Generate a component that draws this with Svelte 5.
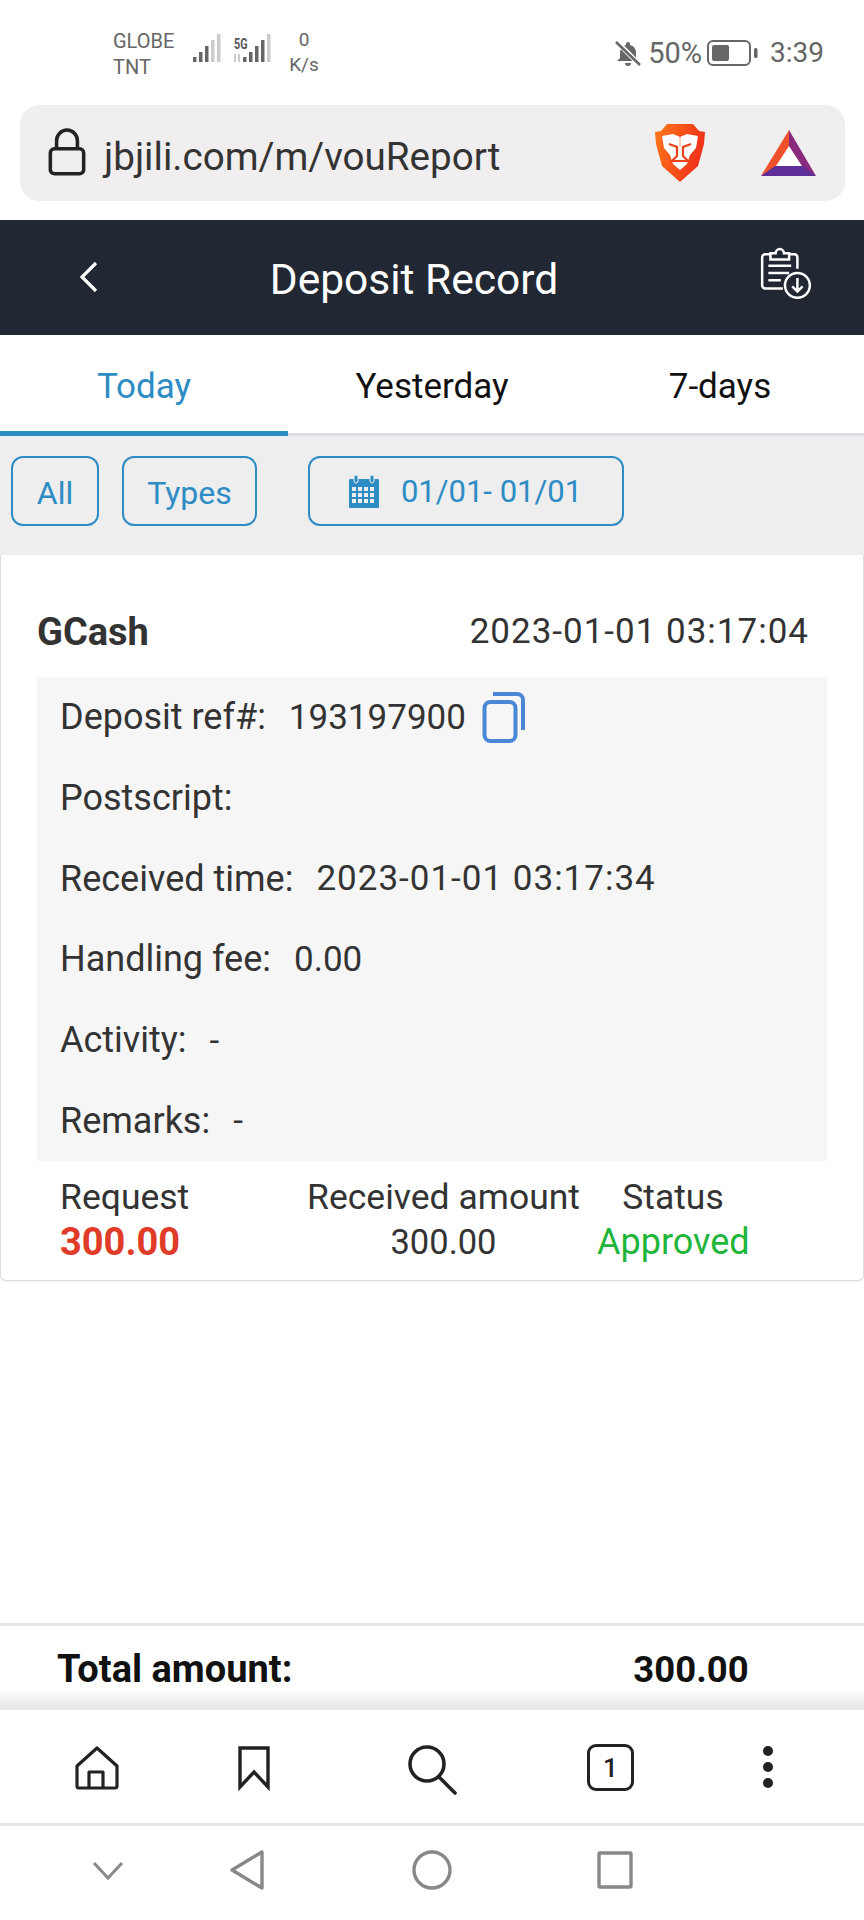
<script>
  const rows = [
    { label: 'Deposit ref#:', value: '193197900', copy: true },
    { label: 'Postscript:', value: '' },
    { label: 'Received time:', value: '2023-01-01 03:17:34', wide: true },
    { label: 'Handling fee:', value: '0.00' },
    { label: 'Activity:', value: '-' },
    { label: 'Remarks:', value: '-' }
  ];
  const tabs = ['Today', 'Yesterday', '7-days'];
</script>

<div class="phone">
  <div class="status">
    <div class="carrier"><span>GLOBE</span><span>TNT</span></div>
    <svg class="signal" width="90" height="36" viewBox="0 0 90 36">
      <g fill="#666">
        <rect x="0" y="27" width="3.5" height="5"/><rect x="6" y="22" width="3.5" height="10"/><rect x="12" y="16" width="3.5" height="16"/>
        <rect x="50" y="27" width="3.5" height="5"/><rect x="56" y="22" width="3.5" height="10"/><rect x="62" y="16" width="3.5" height="16"/><rect x="68" y="10" width="3.5" height="22"/>
      </g>
      <g fill="#ccc">
        <rect x="18" y="10" width="3.5" height="22"/><rect x="24" y="4" width="3.5" height="28"/>
        <rect x="74" y="4" width="3.5" height="28"/>
        <rect x="41" y="24" width="2" height="8"/><rect x="45" y="24" width="2" height="8"/>
      </g>
    </svg>
    <span class="fiveg">5G</span>
    <div class="speed"><span>0</span><span>K/s</span></div>
    <div class="status-right">
      <svg width="28" height="28" viewBox="0 0 28 28">
        <path d="M14 3a2 2 0 0 1 2 2v1c4 1 6 4 6 8v5l3 3H3l3-3v-5c0-4 2-7 6-8V5a2 2 0 0 1 2-2z" fill="#666"/>
        <path d="M11 24h6a3 3 0 0 1-6 0z" fill="#666"/>
        <path d="M3 3l23 23" stroke="#fff" stroke-width="5"/>
        <path d="M2 3l24 23" stroke="#666" stroke-width="2.5"/>
      </svg>
      <span class="pct">50%</span>
      <svg width="52" height="28" viewBox="0 0 52 28">
        <rect x="1" y="2" width="42" height="24" rx="5" fill="none" stroke="#666" stroke-width="2"/>
        <rect x="5" y="6" width="17" height="16" rx="2" fill="#666"/>
        <rect x="47" y="9" width="3.5" height="10" rx="1.5" fill="#666"/>
      </svg>
      <span class="time">3:39</span>
    </div>
  </div>

  <div class="address">
    <svg class="lock" width="40" height="50" viewBox="0 0 38 48">
      <path d="M9 20V12a10 10 0 0 1 20 0v8" fill="none" stroke="#222" stroke-width="3.4"/>
      <rect x="3" y="20" width="32" height="24" rx="4" fill="none" stroke="#222" stroke-width="3.4"/>
    </svg>
    <span class="url">jbjili.com/m/vouReport</span>
    <svg class="brave" width="54" height="62" viewBox="0 0 54 62">
      <defs>
        <linearGradient id="brv" x1="0" y1="0" x2="1" y2="0.3">
          <stop offset="0" stop-color="#ff7a1a"/><stop offset="1" stop-color="#f0301a"/>
        </linearGradient>
      </defs>
      <path d="M14 2h26l6 7 6 1-1 12-6 22-18 16-18-16L3 22 2 10l6-1z" fill="url(#brv)"/>
      <path d="M9 14l11-2 7 3 7-3 11 2-2 12-6 7-3 9-7 6-7-6-3-9-6-7z" fill="#fff"/>
      <path d="M16 22l8 3v9l-5 5h16l-5-5v-9l8-3" fill="none" stroke="#f0401a" stroke-width="2.2"/>
      <path d="M27 15v10" stroke="#fbd0c0" stroke-width="2"/>
    </svg>
    <svg class="bat" width="56" height="50" viewBox="0 0 56 50">
      <polygon points="28,2 28,24 14,40 0,48" fill="#f0512d"/>
      <polygon points="28,2 55,48 42,40 28,24" fill="#8a2a7c"/>
      <polygon points="0,48 14,38 42,38 55,48" fill="#5d2d9a"/>
      <polygon points="28,18 41,38 15,38" fill="#fff"/>
    </svg>
  </div>

  <header class="bar">
    <svg class="back" width="22" height="34" viewBox="0 0 22 34">
      <path d="M18 3L4 17l14 14" fill="none" stroke="#fff" stroke-width="3.2"/>
    </svg>
    <h1>Deposit Record</h1>
    <svg class="report" width="56" height="56" viewBox="0 0 54 54" fill="none" stroke="#fff" stroke-width="2.4">
      <path d="M12 7H7a3 3 0 0 0-3 3v27a3 3 0 0 0 3 3h17"/>
      <path d="M30 7h5a3 3 0 0 1 3 3v11"/>
      <path d="M12 6h5a4 4 0 0 1 8 0h5v6H12z"/>
      <path d="M10 18h22M10 25h20M10 32h12"/>
      <circle cx="38" cy="37" r="12"/>
      <path d="M38 30v13M33 38l5 5 5-5"/>
    </svg>
  </header>

  <nav class="tabs">
    {#each tabs as t, i}
      <div class="tab" class:active={i === 0}>{t}</div>
    {/each}
  </nav>

  <div class="filters">
    <button class="chip all">All</button>
    <button class="chip types">Types</button>
    <button class="chip date">
      <svg width="32" height="36" viewBox="0 0 32 36">
        <path d="M2 6h28a1 1 0 0 1 1 1v27a1 1 0 0 1-1 1H2a1 1 0 0 1-1-1V7a1 1 0 0 1 1-1z" fill="#2d8cc4"/>
        <rect x="6" y="2" width="4" height="8" rx="2" fill="#2d8cc4" stroke="#eee" stroke-width="1"/>
        <rect x="22" y="2" width="4" height="8" rx="2" fill="#2d8cc4" stroke="#eee" stroke-width="1"/>
        <g fill="#eee">
          {#each [14, 20, 26] as y}
            {#each [4, 10, 16, 22] as x}
              <rect {x} {y} width="4" height="4"/>
            {/each}
          {/each}
        </g>
      </svg>
      <span>01/01- 01/01</span>
    </button>
  </div>

  <section class="card">
    <div class="card-head">
      <strong>GCash</strong>
      <span>2023-01-01 03:17:04</span>
    </div>
    <div class="details">
      {#each rows as r}
        <div class="row">
          <span class="label">{r.label}</span>
          {#if r.value}<span class="value" class:wide={r.wide}>{r.value}</span>{/if}
          {#if r.copy}
            <svg class="copy" width="44" height="52" viewBox="0 0 44 52" fill="none" stroke="#4a87d6" stroke-width="4">
              <rect x="2.5" y="11" width="31" height="39" rx="6"/>
              <path d="M11 3h24a6 6 0 0 1 6 6v30"/>
            </svg>
          {/if}
        </div>
      {/each}
    </div>
    <div class="summary">
      <span class="h left">Request</span>
      <span class="h">Received amount</span>
      <span class="h">Status</span>
      <span class="amt left">300.00</span>
      <span class="v">300.00</span>
      <span class="ok">Approved</span>
    </div>
  </section>

  <div class="spacer"></div>

  <div class="total">
    <span>Total amount:</span>
    <span class="sum">300.00</span>
  </div>

  <nav class="browser">
    <svg class="b-home" width="48" height="48" viewBox="0 0 48 48" fill="none" stroke="#222" stroke-width="3.2" stroke-linejoin="round">
      <path d="M24 4L4 22v20a2 2 0 0 0 2 2h36a2 2 0 0 0 2-2V22z"/>
      <path d="M16 44V28h14v16"/>
    </svg>
    <svg class="b-mark" width="34" height="46" viewBox="0 0 34 46" fill="none" stroke="#222" stroke-width="3.4">
      <path d="M3 3h28v39L17 27 3 42z"/>
    </svg>
    <svg class="b-search" width="52" height="52" viewBox="0 0 52 52" fill="none" stroke="#222" stroke-width="3.6">
      <circle cx="21" cy="21" r="17"/>
      <path d="M33 34l16 16" stroke-linecap="round"/>
    </svg>
    <div class="b-tab">1</div>
    <svg class="b-dots" width="12" height="44" viewBox="0 0 12 44" fill="#222">
      <circle cx="6" cy="6" r="5"/><circle cx="6" cy="22" r="5"/><circle cx="6" cy="38" r="5"/>
    </svg>
  </nav>

  <nav class="system">
    <svg class="s-chev" width="32" height="20" viewBox="0 0 32 20" fill="none" stroke="#888" stroke-width="3">
      <path d="M2 2l14 15L30 2"/>
    </svg>
    <svg class="s-back" width="36" height="42" viewBox="0 0 36 42" fill="none" stroke="#888" stroke-width="3.4" stroke-linejoin="round">
      <path d="M33 3v36L3 21z"/>
    </svg>
    <svg class="s-home" width="40" height="40" viewBox="0 0 40 40" fill="none" stroke="#888" stroke-width="3.4">
      <circle cx="20" cy="20" r="18"/>
    </svg>
    <svg class="s-rec" width="36" height="38" viewBox="0 0 36 38" fill="none" stroke="#888" stroke-width="3.4">
      <rect x="2" y="2" width="32" height="34" rx="1"/>
    </svg>
  </nav>
</div>

<style>
  :global(body) { margin: 0; background: #fff; }
  .phone {
    width: 864px; height: 1920px; display: flex; flex-direction: column;
    font-family: Roboto, "Noto Sans", sans-serif; color: #333; overflow: hidden; background: #fff;
  }
  .status { height: 105px; flex: none; display: flex; align-items: center; padding-left: 113px; box-sizing: border-box; color: #666; position: relative; }
  .carrier { display: flex; flex-direction: column; font-size: 20px; line-height: 26px; width: 80px; margin-top: 2px; }
  .signal { margin-top: -9px; }
  .fiveg { position: absolute; left: 234px; top: 35px; font-size: 15px; font-weight: 700; color: #555; transform: scaleX(.72); transform-origin: left; }
  .speed { display: flex; flex-direction: column; align-items: center; font-size: 19px; line-height: 25px; width: 36px; margin-left: 3px; margin-top: -1px; }
  .status-right { margin-left: auto; padding-right: 40px; display: flex; align-items: center; gap: 5px; font-size: 28px; }
  .status-right svg:first-child { margin-right: 1px; }
  .pct { font-size: 29px; }
  .time { margin-left: 6px; }

  .address {
    height: 96px; flex: none; margin: 0 19px 19px 20px; background: #f0eeee; border-radius: 20px;
    display: flex; align-items: center; padding-left: 27px; box-sizing: border-box; position: relative;
  }
  .url { font-size: 38.6px; color: #333; margin-left: 17px; position: relative; top: 3px; }
  .brave { margin-left: auto; margin-right: 54px; }
  .bat { margin-right: 28px; }

  .bar { height: 115px; flex: none; background: #212733; color: #fff; display: flex; align-items: center; justify-content: center; position: relative; padding-right: 36px; padding-top: 3px; box-sizing: border-box; }
  .bar h1 { margin: 0; font-weight: 400; font-size: 42.5px; }
  .back { position: absolute; left: 78px; top: 40px; }
  .report { position: absolute; left: 758px; top: 27px; }

  .tabs { height: 101px; flex: none; display: grid; grid-template-columns: repeat(3, 288px); border-bottom: 3px solid #dcdfe3; box-sizing: border-box; }
  .tab { display: flex; align-items: center; justify-content: center; font-size: 35px; color: #111; margin-bottom: -3px; padding-top: 2px; }
  .tab.active { color: #2d8cc4; border-bottom: 5px solid #2d8cc4; padding-top: 6px; }

  .filters { height: 119px; flex: none; background: #eeeeef; display: flex; align-items: center; padding-left: 11px; box-sizing: border-box; padding-bottom: 9px; }
  .chip { height: 70px; border: 2.5px solid #2d8cc4; border-radius: 12px; background: transparent; color: #2d8cc4; font: inherit; font-size: 32px; padding: 3px 0 0; display: flex; align-items: center; justify-content: center; box-sizing: border-box; }
  .all { width: 88px; margin-right: 23px; }
  .types { width: 135px; margin-right: 51px; }
  .date { width: 316px; gap: 21px; font-size: 31px; padding-top: 0; padding-right: 2px; }

  .card { height: 726px; flex: none; box-sizing: border-box; border: 1px solid #dcdcdc; border-top: none; border-radius: 0 0 6px 6px; padding: 0 36px; box-shadow: 0 1px 2px rgba(0,0,0,.06); }
  .card-head { height: 122px; display: flex; align-items: center; justify-content: space-between; font-size: 35px; letter-spacing: 1px; color: #333; padding: 31px 18px 0 0; box-sizing: border-box; }
  .card-head strong { font-size: 38px; font-weight: 700; letter-spacing: 0; }
  .details { background: #f6f6f6; height: 484px; padding: 0 23px; box-sizing: border-box; display: flex; flex-direction: column; }
  .row { height: 80.7px; flex: none; display: flex; align-items: center; font-size: 36px; gap: 23px; }
  .value { font-size: 35px; }
  .value.wide { letter-spacing: 1px; }
  .copy { margin-left: -7px; }
  .summary { display: grid; grid-template-columns: 230px 273px 152px; column-gap: 17px; padding: 14px 0 0 23px; font-size: 35.5px; line-height: 45px; text-align: center; }
  .left { text-align: left; }
  .amt { color: #e03a28; font-weight: 700; font-size: 38px; }
  .v { font-size: 34.5px; }
  .ok { color: #1fb53a; white-space: nowrap; font-size: 36px; }

  .spacer { flex: 1; }

  .total { height: 87px; flex: none; border-top: 3px solid #e6e6e6; box-sizing: border-box; display: flex; align-items: center; padding-left: 57px; padding-top: 2px; font-size: 38px; font-weight: 700; color: #111; background: linear-gradient(#fff 0, #fff 76%, #e4e4e4 100%); }
  .sum { margin-left: 341px; font-size: 36.5px; }

  .browser { height: 116px; flex: none; position: relative; border-bottom: 3px solid #e6e6e6; box-sizing: border-box; }
  .browser > * { position: absolute; }
  .b-home { left: 73px; top: 34px; }
  .b-mark { left: 237px; top: 35px; }
  .b-search { left: 406px; top: 33px; }
  .b-tab { left: 587px; top: 34px; width: 47px; height: 47px; border: 3.4px solid #222; border-radius: 9px; box-sizing: border-box; display: flex; align-items: center; justify-content: center; font-size: 26px; font-weight: 500; color: #222; }
  .b-dots { left: 762px; top: 35px; }

  .system { height: 94px; flex: none; position: relative; }
  .system > * { position: absolute; }
  .s-chev { left: 92px; top: 35px; }
  .s-back { left: 229px; top: 23px; }
  .s-home { left: 412px; top: 24px; }
  .s-rec { left: 597px; top: 25px; }
</style>
